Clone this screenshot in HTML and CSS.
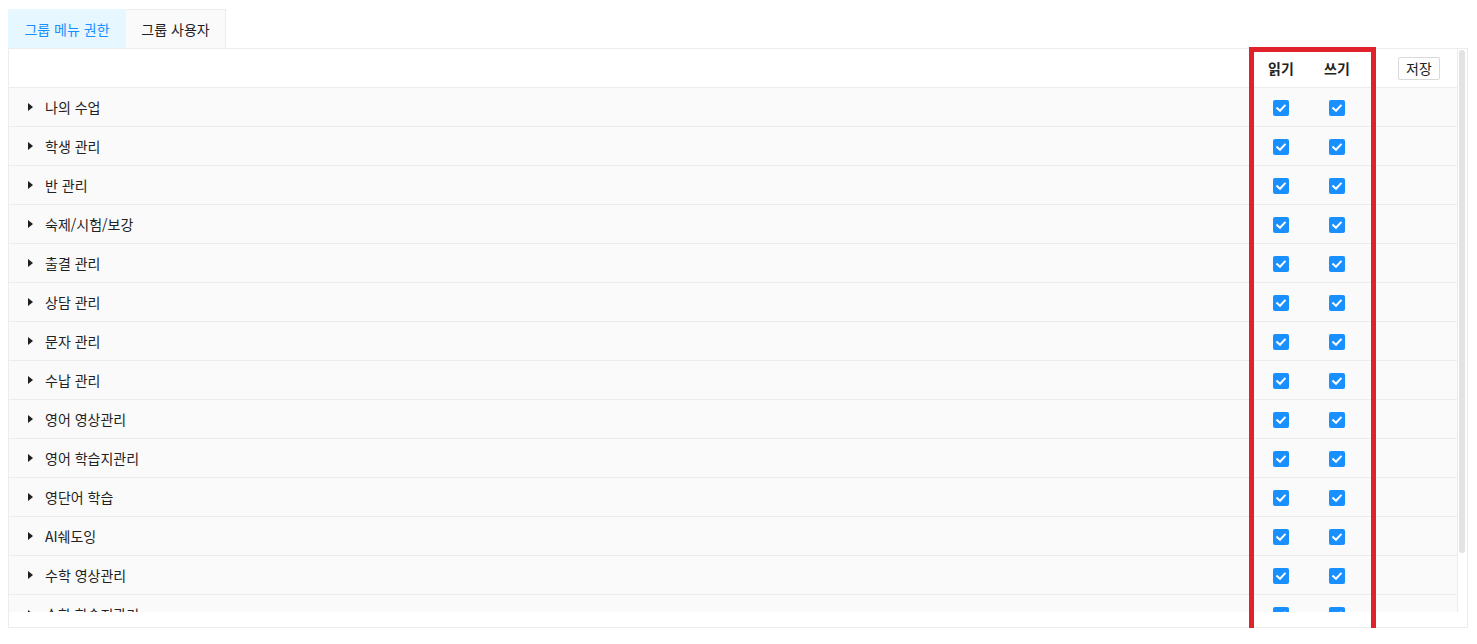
FILE: index.html
```html
<!DOCTYPE html>
<html lang="ko">
<head>
<meta charset="utf-8">
<title>그룹 메뉴 권한</title>
<link rel="stylesheet" href="styles.css">
</head>
<body>
<div class="page">
  <div class="tabs">
    <div class="tab active">그룹 메뉴 권한</div>
    <div class="tab">그룹 사용자</div>
  </div>
  <div class="panel">
    <div class="body">
      <div class="scroller">
        <div class="row head">
          <div class="name"></div>
          <div class="col">읽기</div>
          <div class="col">쓰기</div>
          <div class="act"><button class="btn">저장</button></div>
        </div>
        <div class="row"><div class="name"><span class="caret"></span>나의 수업</div><div class="col"><span class="cb"><svg viewBox="0 0 16 16"><path d="M4.2 8.2 L7 10.8 L11.8 5.6"/></svg></span></div><div class="col"><span class="cb"><svg viewBox="0 0 16 16"><path d="M4.2 8.2 L7 10.8 L11.8 5.6"/></svg></span></div><div class="act"></div></div>
        <div class="row"><div class="name"><span class="caret"></span>학생 관리</div><div class="col"><span class="cb"><svg viewBox="0 0 16 16"><path d="M4.2 8.2 L7 10.8 L11.8 5.6"/></svg></span></div><div class="col"><span class="cb"><svg viewBox="0 0 16 16"><path d="M4.2 8.2 L7 10.8 L11.8 5.6"/></svg></span></div><div class="act"></div></div>
        <div class="row"><div class="name"><span class="caret"></span>반 관리</div><div class="col"><span class="cb"><svg viewBox="0 0 16 16"><path d="M4.2 8.2 L7 10.8 L11.8 5.6"/></svg></span></div><div class="col"><span class="cb"><svg viewBox="0 0 16 16"><path d="M4.2 8.2 L7 10.8 L11.8 5.6"/></svg></span></div><div class="act"></div></div>
        <div class="row"><div class="name"><span class="caret"></span>숙제/시험/보강</div><div class="col"><span class="cb"><svg viewBox="0 0 16 16"><path d="M4.2 8.2 L7 10.8 L11.8 5.6"/></svg></span></div><div class="col"><span class="cb"><svg viewBox="0 0 16 16"><path d="M4.2 8.2 L7 10.8 L11.8 5.6"/></svg></span></div><div class="act"></div></div>
        <div class="row"><div class="name"><span class="caret"></span>출결 관리</div><div class="col"><span class="cb"><svg viewBox="0 0 16 16"><path d="M4.2 8.2 L7 10.8 L11.8 5.6"/></svg></span></div><div class="col"><span class="cb"><svg viewBox="0 0 16 16"><path d="M4.2 8.2 L7 10.8 L11.8 5.6"/></svg></span></div><div class="act"></div></div>
        <div class="row"><div class="name"><span class="caret"></span>상담 관리</div><div class="col"><span class="cb"><svg viewBox="0 0 16 16"><path d="M4.2 8.2 L7 10.8 L11.8 5.6"/></svg></span></div><div class="col"><span class="cb"><svg viewBox="0 0 16 16"><path d="M4.2 8.2 L7 10.8 L11.8 5.6"/></svg></span></div><div class="act"></div></div>
        <div class="row"><div class="name"><span class="caret"></span>문자 관리</div><div class="col"><span class="cb"><svg viewBox="0 0 16 16"><path d="M4.2 8.2 L7 10.8 L11.8 5.6"/></svg></span></div><div class="col"><span class="cb"><svg viewBox="0 0 16 16"><path d="M4.2 8.2 L7 10.8 L11.8 5.6"/></svg></span></div><div class="act"></div></div>
        <div class="row"><div class="name"><span class="caret"></span>수납 관리</div><div class="col"><span class="cb"><svg viewBox="0 0 16 16"><path d="M4.2 8.2 L7 10.8 L11.8 5.6"/></svg></span></div><div class="col"><span class="cb"><svg viewBox="0 0 16 16"><path d="M4.2 8.2 L7 10.8 L11.8 5.6"/></svg></span></div><div class="act"></div></div>
        <div class="row"><div class="name"><span class="caret"></span>영어 영상관리</div><div class="col"><span class="cb"><svg viewBox="0 0 16 16"><path d="M4.2 8.2 L7 10.8 L11.8 5.6"/></svg></span></div><div class="col"><span class="cb"><svg viewBox="0 0 16 16"><path d="M4.2 8.2 L7 10.8 L11.8 5.6"/></svg></span></div><div class="act"></div></div>
        <div class="row"><div class="name"><span class="caret"></span>영어 학습지관리</div><div class="col"><span class="cb"><svg viewBox="0 0 16 16"><path d="M4.2 8.2 L7 10.8 L11.8 5.6"/></svg></span></div><div class="col"><span class="cb"><svg viewBox="0 0 16 16"><path d="M4.2 8.2 L7 10.8 L11.8 5.6"/></svg></span></div><div class="act"></div></div>
        <div class="row"><div class="name"><span class="caret"></span>영단어 학습</div><div class="col"><span class="cb"><svg viewBox="0 0 16 16"><path d="M4.2 8.2 L7 10.8 L11.8 5.6"/></svg></span></div><div class="col"><span class="cb"><svg viewBox="0 0 16 16"><path d="M4.2 8.2 L7 10.8 L11.8 5.6"/></svg></span></div><div class="act"></div></div>
        <div class="row"><div class="name"><span class="caret"></span>AI쉐도잉</div><div class="col"><span class="cb"><svg viewBox="0 0 16 16"><path d="M4.2 8.2 L7 10.8 L11.8 5.6"/></svg></span></div><div class="col"><span class="cb"><svg viewBox="0 0 16 16"><path d="M4.2 8.2 L7 10.8 L11.8 5.6"/></svg></span></div><div class="act"></div></div>
        <div class="row"><div class="name"><span class="caret"></span>수학 영상관리</div><div class="col"><span class="cb"><svg viewBox="0 0 16 16"><path d="M4.2 8.2 L7 10.8 L11.8 5.6"/></svg></span></div><div class="col"><span class="cb"><svg viewBox="0 0 16 16"><path d="M4.2 8.2 L7 10.8 L11.8 5.6"/></svg></span></div><div class="act"></div></div>
        <div class="row"><div class="name"><span class="caret"></span>수학 학습지관리</div><div class="col"><span class="cb"><svg viewBox="0 0 16 16"><path d="M4.2 8.2 L7 10.8 L11.8 5.6"/></svg></span></div><div class="col"><span class="cb"><svg viewBox="0 0 16 16"><path d="M4.2 8.2 L7 10.8 L11.8 5.6"/></svg></span></div><div class="act"></div></div>
      </div>
      <div class="scrollbar"><div class="thumb"></div></div>
    </div>
  </div>
  <div class="highlight"></div>
</div>
</body>
</html>
```
FILE: styles.css
```css
* { box-sizing: border-box; }
html, body { margin: 0; padding: 0; background: #fff; }
body {
  font-family: "Noto Sans CJK KR", "Noto Sans", sans-serif;
  font-size: 14px;
  color: #222;
}
.page {
  position: relative;
  padding: 9px 9px 0 8px;
}
.tabs {
  display: flex;
  height: 39px;
}
.tab {
  display: flex;
  align-items: center;
  justify-content: center;
  background: #fafafa;
  border: 1px solid #ececec;
  border-bottom: none;
  color: #222;
  padding-bottom: 1px;
}
.tab.active {
  width: 118px;
  background: #e6f7ff;
  border-color: #e6f7ff;
  color: #1890ff;
}
.tab + .tab { border-left: none; width: 100px; }
.panel {
  border: 1px solid #ececec;
  height: 580px;
  padding-bottom: 15px;
}
.body {
  display: flex;
  height: 100%;
}
.scroller {
  flex: 1;
  min-width: 0;
  overflow: hidden;
}
.scrollbar {
  width: 10px;
  border-left: 1px solid #ececec;
  padding: 1px 2px 0 1px;
  background: #fff;
}
.thumb {
  height: 503px;
  background: #e3e3e3;
  border-radius: 3px;
}
.row {
  display: grid;
  grid-template-columns: 1fr 56px 56px 92px;
  height: 39px;
  align-items: center;
  background: #fafafa;
  border-bottom: 1px solid #ececec;
}
.row.head {
  background: #fff;
  font-weight: 700;
}
.name {
  display: flex;
  align-items: center;
  padding-left: 19px;
}
.caret {
  width: 0;
  height: 0;
  border-top: 4px solid transparent;
  border-bottom: 4px solid transparent;
  border-left: 5px solid #1f1f1f;
  margin-right: 12px;
}
.col {
  display: flex;
  justify-content: center;
  align-items: center;
}
.cb {
  display: block;
  width: 16px;
  height: 16px;
  margin-top: 2px;
  background: #1890ff;
  border-radius: 2px;
}
.cb svg { display: block; width: 16px; height: 16px; }
.cb path { fill: none; stroke: #fff; stroke-width: 2; stroke-linecap: square; stroke-linejoin: miter; }
.act {
  display: flex;
  justify-content: flex-end;
  padding-right: 17px;
}
.btn {
  font-family: inherit;
  font-size: 14px;
  font-weight: 400;
  color: #222;
  background: #fff;
  border: 1px solid #d9d9d9;
  border-radius: 2px;
  height: 23px;
  width: 42px;
  padding: 0;
  line-height: 21px;
}
.highlight {
  position: absolute;
  left: 1249px;
  top: 47px;
  width: 127px;
  height: 587px;
  border: 5px solid #e0222a;
  pointer-events: none;
  z-index: 2;
}
```
